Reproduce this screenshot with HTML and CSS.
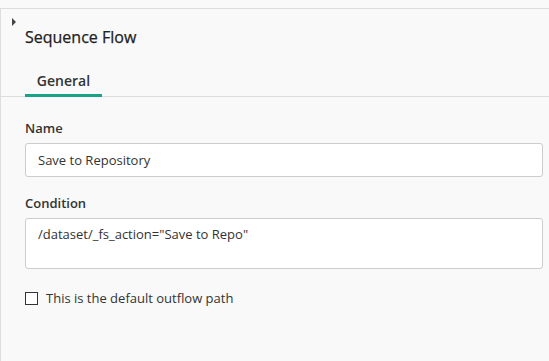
FILE: index.html
```html
<!DOCTYPE html>
<html>
<head>
  <title>Sequence Flow Properties</title>
  <meta charset="UTF-8">
  <link rel="stylesheet" href="styles.css">
</head>
<body>
  <div class="panel">
    <div class="toggle">
      <svg width="5" height="8" viewBox="0 0 5 8"><path d="M0 0 L4 4 L0 8 Z" fill="#444"/></svg>
    </div>
    <h2 class="title">Sequence Flow</h2>
    <div class="tabs">
      <div class="tab active">General</div>
    </div>
    <div class="form">
      <label class="field-label">Name</label>
      <input type="text" class="field-input" value="Save to Repository">
      <label class="field-label">Condition</label>
      <textarea class="field-area">/dataset/_fs_action="Save to Repo"</textarea>
      <label class="check-row">
        <span class="check-box"></span>
        This is the default outflow path
      </label>
    </div>
  </div>
</body>
</html>
```

FILE: styles.css
```css
body {
  margin: 0;
  background: #f9f9f9;
  font-family: 'Open Sans', sans-serif;
  color: #333333;
  padding-top: 8px;
}
.panel {
  border-top: 1px solid #dddddd;
  border-left: 1px solid #dddddd;
  height: 353px;
  box-sizing: border-box;
  position: relative;
}
.toggle {
  position: absolute;
  top: 9px;
  left: 11px;
  line-height: 0;
}
.title {
  margin: 0;
  padding: 17px 0 0 24px;
  font-size: 16px;
  font-weight: 400;
  line-height: 22px;
  color: #222222;
  -webkit-text-stroke: 0.25px #222222;
}
.tabs {
  display: flex;
  margin-top: 23px;
  padding-left: 24px;
  border-bottom: 1px solid #dddddd;
}
.tab {
  width: 77px;
  text-align: center;
  font-size: 14px;
  font-weight: 600;
  line-height: 20px;
  padding-bottom: 3px;
  border-bottom: 3px solid #16a386;
  margin-bottom: -1px;
}
.form {
  display: flex;
  flex-direction: column;
  padding: 0 6px 0 24px;
}
.field-label {
  font-size: 13px;
  font-weight: 600;
  line-height: 18px;
  margin-top: 22px;
  margin-bottom: 6px;
}
.field-input + .field-label {
  margin-top: 17px;
}
.field-input,
.field-area {
  font-family: inherit;
  font-size: 13px;
  color: #333333;
  background: #ffffff;
  border: 1px solid #cccccc;
  border-radius: 3px;
  padding: 0 12px;
  box-sizing: border-box;
  outline: none;
}
.field-input {
  height: 34px;
}
.field-area {
  height: 51px;
  padding-top: 6px;
  resize: none;
  line-height: 18px;
}
.check-row {
  display: flex;
  align-items: center;
  gap: 8px;
  margin-top: 20px;
  font-size: 13px;
  line-height: 18px;
}
.check-box {
  width: 11px;
  height: 11px;
  border: 1px solid #333333;
  background: #ffffff;
}
```
